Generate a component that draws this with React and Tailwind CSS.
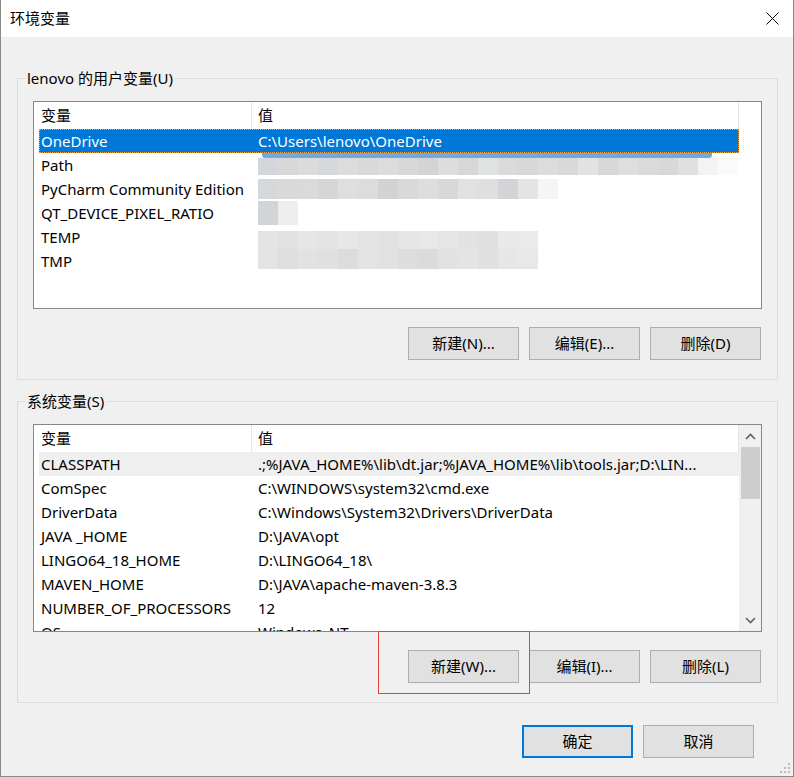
import React from 'react'

const userVars = [
  { name: 'OneDrive', value: 'C:\\Users\\lenovo\\OneDrive', selected: true },
  { name: 'Path', mosaic: 'path' },
  { name: 'PyCharm Community Edition', mosaic: 'pycharm' },
  { name: 'QT_DEVICE_PIXEL_RATIO', mosaic: 'qt' },
  { name: 'TEMP', mosaic: 'temp' },
  { name: 'TMP', mosaic: 'tmp' },
]

const sysVars = [
  { name: 'CLASSPATH', value: '.;%JAVA_HOME%\\lib\\dt.jar;%JAVA_HOME%\\lib\\tools.jar;D:\\LIN...', hover: true },
  { name: 'ComSpec', value: 'C:\\WINDOWS\\system32\\cmd.exe' },
  { name: 'DriverData', value: 'C:\\Windows\\System32\\Drivers\\DriverData' },
  { name: 'JAVA _HOME', value: 'D:\\JAVA\\opt' },
  { name: 'LINGO64_18_HOME', value: 'D:\\LINGO64_18\\' },
  { name: 'MAVEN_HOME', value: 'D:\\JAVA\\apache-maven-3.8.3' },
  { name: 'NUMBER_OF_PROCESSORS', value: '12' },
  { name: 'OS', value: 'Windows_NT' },
]

// pixelated redaction blocks over the user values
const mosaics = {
  path: {
    h: 'h-[17px]',
    smear: true,
    cells: ['bg-[#d3d7db]', 'bg-[#d8d8d8]', 'bg-[#dcdbd9]', 'bg-[#d6d8da]', 'bg-[#dddcda]', 'bg-[#d9d9d9]', 'bg-[#dcdcdc]', 'bg-[#d7d7d7]', 'bg-[#d4d4d4]', 'bg-[#dcdddd]', 'bg-[#d8d7d5]', 'bg-[#e0e1e1]', 'bg-[#dadada]', 'bg-[#d9d8d6]', 'bg-[#dcdcdc]', 'bg-[#d9d9d9]', 'bg-[#e2e2e2]', 'bg-[#d8d8d8]', 'bg-[#dedede]', 'bg-[#dadada]', 'bg-[#d8d8d8]', 'bg-[#e0e0e0]', 'bg-[#f3f3f3]', 'bg-[#fafafa]'],
  },
  pycharm: {
    h: 'h-[20px]',
    cells: ['bg-[#d5d8db]', 'bg-[#d9d9d9]', 'bg-[#dadad8]', 'bg-[#d6d6d6]', 'bg-[#dedede]', 'bg-[#dcdcdc]', 'bg-[#d3d3d3]', 'bg-[#d9d9d9]', 'bg-[#dddddd]', 'bg-[#d8d8d8]', 'bg-[#e1e1e1]', 'bg-[#dfdfdd]', 'bg-[#d2d4d8]', 'bg-[#e4e4e4]', 'bg-[#f4f6f6]', 'bg-[#ffffff]'],
  },
  qt: {
    h: 'h-[24px]',
    cells: ['bg-[#d2d5d7]', 'bg-[#eeeeee]'],
  },
  temp: {
    h: 'h-[18px] self-end',
    cells: ['bg-[#e3e4e4]', 'bg-[#e1e1e1]', 'bg-[#e6e6e6]', 'bg-[#e4e4e4]', 'bg-[#e7e7e7]', 'bg-[#e3e3e3]', 'bg-[#e1e1e1]', 'bg-[#e6e6e6]', 'bg-[#e8e8e8]', 'bg-[#e5e5e5]', 'bg-[#e2e2e2]', 'bg-[#e0e0e0]', 'bg-[#e9e9e9]', 'bg-[#eaeaea]'],
  },
  tmp: {
    h: 'h-[20px] self-start',
    cells: ['bg-[#e4e4e4]', 'bg-[#dedede]', 'bg-[#e2e2e2]', 'bg-[#e0e0e0]', 'bg-[#dcdcdc]', 'bg-[#e3e3e3]', 'bg-[#e1e1e1]', 'bg-[#dddddd]', 'bg-[#dbdbdb]', 'bg-[#e2e2e2]', 'bg-[#e4e4e4]', 'bg-[#e0e0e0]', 'bg-[#e6e6e6]', 'bg-[#e8e8e8]'],
  },
}

function Mosaic({ kind }) {
  const m = mosaics[kind]
  const cells = (
    <div className={`flex ${m.h}`}>
      {m.cells.map((c, i) => (
        <div key={i} className={`w-[20px] h-full ${c}`} />
      ))}
    </div>
  )
  if (!m.smear) return cells
  return (
    <div className="flex flex-col self-start">
      <div className="ml-[4px] w-[450px] h-[5px] bg-[#71a9de] rounded-b-[3px]" />
      {cells}
    </div>
  )
}

function Chevron({ up }) {
  return (
    <svg width="11" height="7" viewBox="0 0 11 7">
      <polyline
        points={up ? '1,6 5.5,1.5 10,6' : '1,1 5.5,5.5 10,1'}
        fill="none"
        stroke="#606060"
        strokeWidth="1.6"
      />
    </svg>
  )
}

function VarList({ rows, scroll }) {
  return (
    <div className="h-[208px] border border-[#828790] bg-white flex overflow-hidden">
      <div className="w-[705px] pl-[5px] flex flex-col">
        <div className="h-[27px] w-[700px] shrink-0 flex border-r border-[#e5e5e5]">
          <div className="w-[213px] pl-[2px] border-r border-[#e5e5e5] flex items-center">变量</div>
          <div className="pl-[6px] flex items-center">值</div>
        </div>
        {rows.map(r => (
          <div
            key={r.name}
            className={
              r.selected
                ? 'h-[24px] w-[700px] shrink-0 flex items-center bg-[#0078d7] text-white border border-dotted border-[#f2a243]'
                : r.hover
                ? 'h-[24px] w-[700px] shrink-0 flex items-center bg-[#efefef]'
                : 'h-[24px] w-[700px] shrink-0 flex items-center'
            }
          >
            <div className={r.selected ? 'w-[212px] pl-[1px] whitespace-nowrap' : 'w-[213px] pl-[2px] whitespace-nowrap'}>
              {r.name}
            </div>
            <div className="pl-[6px] h-full flex items-center whitespace-nowrap">
              {r.mosaic ? <Mosaic kind={r.mosaic} /> : r.value}
            </div>
          </div>
        ))}
      </div>
      {scroll ? (
        <div className="w-[22px] bg-[#f0f0f0] flex flex-col">
          <div className="h-[22px] flex items-center justify-center">
            <Chevron up />
          </div>
          <div className="h-[52px] ml-[2px] mr-[1px] bg-[#cdcdcd]" />
          <div className="flex-1" />
          <div className="h-[22px] flex items-center justify-center">
            <Chevron />
          </div>
        </div>
      ) : (
        <div className="w-[22px]" />
      )}
    </div>
  )
}

function Btn({ children, primary }) {
  return (
    <button
      className={
        primary
          ? 'w-[111px] h-[33px] bg-[#e1e1e1] border-2 border-[#0078d7] text-black'
          : 'w-[111px] h-[33px] bg-[#e1e1e1] border border-[#adadad] text-black'
      }
    >
      {children}
    </button>
  )
}

function Group({ label, rows, scroll, buttons }) {
  return (
    <div className="relative border border-[#dcdcdc] pt-[22px] px-[15px] pb-[19px]">
      <div className="absolute left-[7px] top-[-12px] px-[2px] bg-[#f0f0f0] leading-[22px]">{label}</div>
      <VarList rows={rows} scroll={scroll} />
      <div className="mt-[18px] flex justify-end gap-[10px] pr-[1px]">
        {buttons.map(b => (
          <Btn key={b}>{b}</Btn>
        ))}
      </div>
    </div>
  )
}

export default function App() {
  return (
    <div className="relative w-[794px] h-[777px] bg-[#f0f0f0] border-x border-b border-[#8a8a8a] flex flex-col text-[15px] text-black font-['Noto_Sans','Noto_Sans_CJK_SC',sans-serif]">
      <div className="h-[37px] shrink-0 bg-white flex items-center justify-between pl-[9px] pr-[14px]">
        <span>环境变量</span>
        <svg width="13" height="13" viewBox="0 0 13 13">
          <path d="M0.5 0.5 L12.5 12.5 M12.5 0.5 L0.5 12.5" stroke="#000" strokeWidth="1" />
        </svg>
      </div>

      <div className="pl-[16px] pr-[15px] pt-[41px] flex flex-col">
        <Group
          label="lenovo 的用户变量(U)"
          rows={userVars}
          buttons={['新建(N)...', '编辑(E)...', '删除(D)']}
        />
        <div className="mt-[21px]">
          <Group
            label="系统变量(S)"
            rows={sysVars}
            scroll
            buttons={['新建(W)...', '编辑(I)...', '删除(L)']}
          />
        </div>
        <div className="mt-[22px] flex justify-end gap-[10px] pr-[24px]">
          <Btn primary>确定</Btn>
          <Btn>取消</Btn>
        </div>
      </div>

      {/* red annotation box drawn over the screenshot */}
      <div className="absolute left-[377px] top-[631px] w-[152px] h-[63px] border border-[#e8403f]" />

      {/* resize grip */}
      <svg className="absolute right-[2px] bottom-[2px]" width="12" height="12" viewBox="0 0 12 12">
        <rect x="9" y="1" width="2" height="2" fill="#bdbdbd" />
        <rect x="5" y="5" width="2" height="2" fill="#bdbdbd" />
        <rect x="9" y="5" width="2" height="2" fill="#bdbdbd" />
        <rect x="1" y="9" width="2" height="2" fill="#bdbdbd" />
        <rect x="5" y="9" width="2" height="2" fill="#bdbdbd" />
        <rect x="9" y="9" width="2" height="2" fill="#bdbdbd" />
      </svg>
    </div>
  )
}
